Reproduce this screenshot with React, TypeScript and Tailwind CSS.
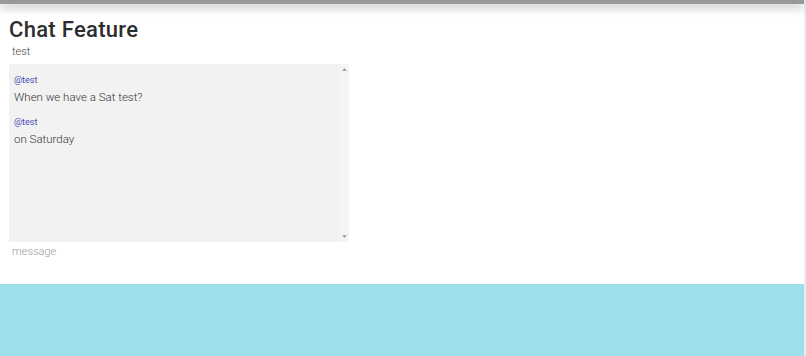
import React from "react";

export default function App() {
  return (
    <div className="w-[806px] h-[356px] flex bg-white overflow-hidden" style={{ fontFamily: "Roboto, 'Liberation Sans', sans-serif" }}>
      <div className="w-[804px] flex flex-col">
        <div className="h-[4px] bg-[#999999] shadow-[0_3px_10px_rgba(0,0,0,0.35)] relative z-10" />
        <div className="h-[280px] flex flex-col pl-[9px]">
          <h1 className="text-[22px] leading-[28px] font-medium text-[#2e2e2e] mt-[12px] tracking-[0.3px]">Chat Feature</h1>
          <div className="text-[11px] leading-[14px] font-light text-[#444] pl-[3px] mt-[1px]">test</div>
          <div className="w-[340px] h-[178px] bg-[#f2f2f2] mt-[5px] flex">
            <div className="flex-1 pl-[5px] pt-[10px] flex flex-col">
              <div className="text-[9px] leading-[12px] text-[#4a4ab8]">@test</div>
              <div className="text-[11.5px] leading-[16px] font-light text-[#333] mt-[3px]">When we have a Sat test?</div>
              <div className="text-[9px] leading-[12px] text-[#4a4ab8] mt-[11px]">@test</div>
              <div className="text-[11.5px] leading-[16px] font-light text-[#333] mt-[3px]">on Saturday</div>
            </div>
            <div className="w-[9px] bg-[#f5f5f5] flex flex-col items-center justify-between py-[4px]">
              <svg width="5" height="3" viewBox="0 0 5 3"><path d="M0 3 L2.5 0 L5 3 Z" fill="#a3a3a3" /></svg>
              <svg width="5" height="3" viewBox="0 0 5 3"><path d="M0 0 L2.5 3 L5 0 Z" fill="#a3a3a3" /></svg>
            </div>
          </div>
          <input
            placeholder="message"
            className="w-[340px] text-[11px] leading-[14px] font-light text-[#333] placeholder:text-[#999] pl-[3px] mt-[3px] outline-none bg-transparent"
          />
        </div>
        <div className="flex-1 bg-[#9ddfea]" />
      </div>
      <div className="w-[2px] bg-[#ececec]" />
    </div>
  );
}
